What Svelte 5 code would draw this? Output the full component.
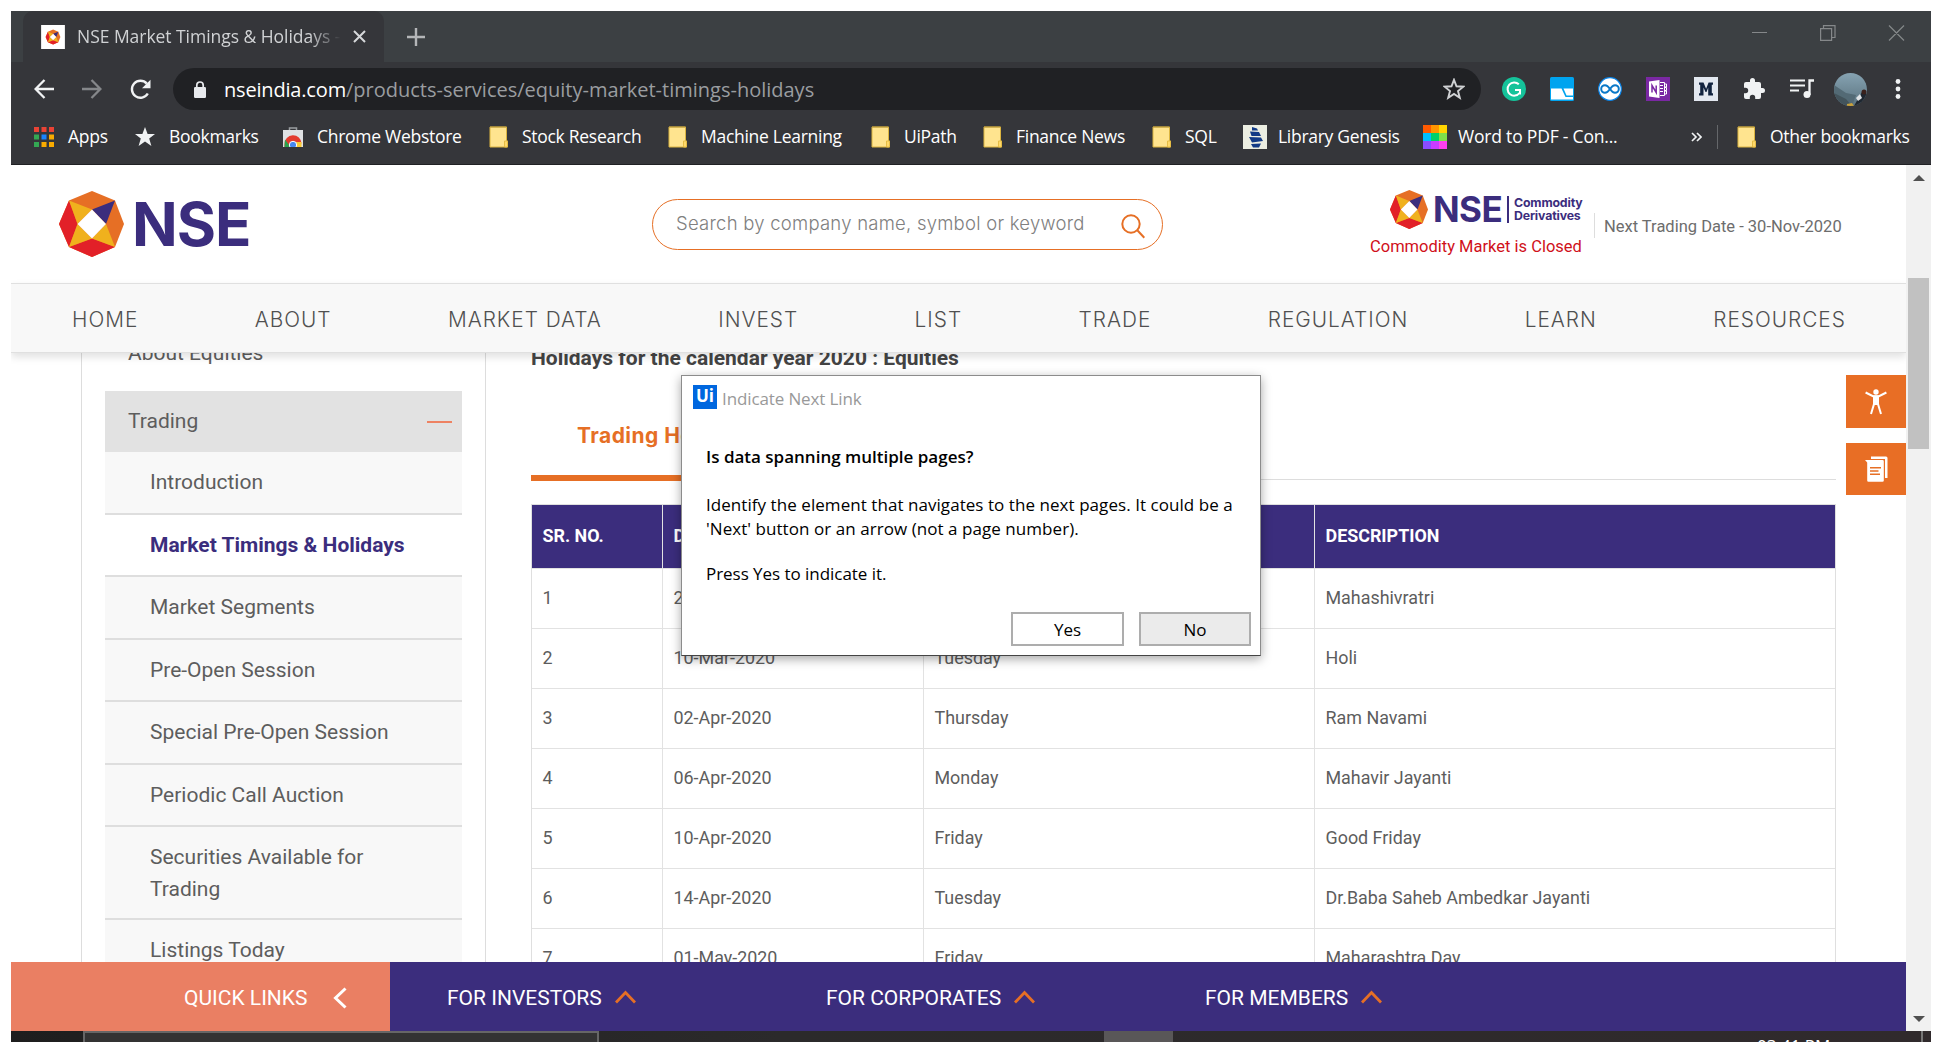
<script lang="ts">
  const bookmarks = [
    { label: 'Apps', icon: 'apps', w: 101 },
    { label: 'Bookmarks', icon: 'star', w: 148 },
    { label: 'Chrome Webstore', icon: 'store', w: 206 },
    { label: 'Stock Research', icon: 'folder', w: 179 },
    { label: 'Machine Learning', icon: 'folder', w: 203 },
    { label: 'UiPath', icon: 'folder', w: 112 },
    { label: 'Finance News', icon: 'folder', w: 169 },
    { label: 'SQL', icon: 'folder', w: 91 },
    { label: 'Library Genesis', icon: 'ship', w: 180 },
    { label: 'Word to PDF - Con...', icon: 'grid', w: 268 }
  ];
  const grid = ['#ff5a00', '#ff9500', '#ffd500', '#00bfff', '#00d06a', '#7ee04a', '#8a4dff', '#c83cff', '#ff40f0'];
  const appDots = ['#ea4335', '#ea4335', '#ea4335', '#34a853', '#1a84ff', '#f9ab00', '#34a853', '#f9ab00', '#f9ab00'];
  const nav = ['HOME', 'ABOUT', 'MARKET DATA', 'INVEST', 'LIST', 'TRADE', 'REGULATION', 'LEARN', 'RESOURCES'];
  const side = [
    'Introduction',
    'Market Timings & Holidays',
    'Market Segments',
    'Pre-Open Session',
    'Special Pre-Open Session',
    'Periodic Call Auction',
    'Securities Available for Trading',
    'Listings Today'
  ];
  const rows = [
    ['1', '21-Feb-2020', 'Friday', 'Mahashivratri'],
    ['2', '10-Mar-2020', 'Tuesday', 'Holi'],
    ['3', '02-Apr-2020', 'Thursday', 'Ram Navami'],
    ['4', '06-Apr-2020', 'Monday', 'Mahavir Jayanti'],
    ['5', '10-Apr-2020', 'Friday', 'Good Friday'],
    ['6', '14-Apr-2020', 'Tuesday', 'Dr.Baba Saheb Ambedkar Jayanti'],
    ['7', '01-May-2020', 'Friday', 'Maharashtra Day']
  ];
  const links = ['FOR INVESTORS', 'FOR CORPORATES', 'FOR MEMBERS'];
</script>

{#snippet gem()}
  <polygon points="33,0 56,9.5 65,33 56,56 33,66 10,56 0,33 10,9.5" fill="#e66f25" />
  <polygon points="10,9.5 0,33 10,56 18.5,33" fill="#e22028" />
  <polygon points="10,56 33,66 56,56 33,47.5" fill="#e22028" />
  <polygon points="10,9.5 33,18.5 18.5,33" fill="#f0b11d" />
  <polygon points="10,56 18.5,33 33,47.5" fill="#f0b11d" />
  <polygon points="56,56 33,47.5 47,33" fill="#f0b11d" />
  <polygon points="56,9.5 33,18.5 47,33" fill="#3b2d7d" />
  <polygon points="33,18.5 47,33 33,47.5 18.5,33" fill="#fff" />
{/snippet}

{#snippet folder()}
  <svg width="20" height="22" viewBox="0 0 20 22">
    <path d="M1 1h16.500v14h1v6H1z" fill="#ffe48f" stroke="#dcb540" stroke-width="1" />
    <path d="M1 1h16.500" stroke="#b99a3c" />
    <path d="M15.500 21v-6h3v6z" fill="#ffd96a" stroke="#e6bd45" />
  </svg>
{/snippet}

<div class="window">
  <div class="tabs">
    <div class="tab">
      <svg class="fav" width="24" height="24" viewBox="-20 -20 105 106"><rect x="-20" y="-20" width="105" height="106" fill="#fff" />{@render gem()}</svg>
      <span class="tab-title">NSE Market Timings &amp; Holidays -</span>
      <svg width="13" height="13" viewBox="0 0 13 13"><path d="M1 1l11 11M12 1L1 12" stroke="#d6d8da" stroke-width="2" /></svg>
    </div>
    <svg class="plus" width="18" height="18" viewBox="0 0 18 18"><path d="M9 0v18M0 9h18" stroke="#b4b6b8" stroke-width="2.400" /></svg>
    <svg class="controls" width="153" height="16" viewBox="0 0 153 16" fill="none" stroke="#85888a" stroke-width="1.200">
      <path d="M0 7.500h15M71.500 3.500V.6h11.500v11.900h-3M68.600 3.600h11v11.800h-11zM137 .5l15 15M152 .5l-15 15" />
    </svg>
  </div>

  <div class="toolbar">
    <svg width="20" height="20" viewBox="0 0 20 20" fill="none" stroke="#f1f3f4" stroke-width="2.300"><path d="M20 10H2M10.500 1L1.600 10l8.900 9" /></svg>
    <svg width="20" height="20" viewBox="0 0 20 20" fill="none" stroke="#85878a" stroke-width="2.300"><path d="M0 10h18M9.500 1l8.900 9-8.900 9" /></svg>
    <svg width="21" height="21" viewBox="0 0 21 21"><path d="M17.800 14.500A8.500 8.500 0 1 1 16.800 4.600" fill="none" stroke="#f1f3f4" stroke-width="2.400" /><path d="M20.500.8v8.400H12z" fill="#f1f3f4" /></svg>
    <div class="address">
      <svg width="12" height="17" viewBox="0 0 12 17"><rect y="6" width="12" height="11" rx="1.200" fill="#e8eaed" /><path d="M2.800 7V4.200a3.200 3.200 0 0 1 6.400 0V7" fill="none" stroke="#e8eaed" stroke-width="1.700" /></svg>
      <span class="url"><b>nseindia.com</b>/products-services/equity-market-timings-holidays</span>
      <svg width="22" height="22" viewBox="0 0 22 22"><path d="M11 1.800l2.500 6.500 6.900.4-5.400 4.400 1.800 6.700L11 16l-5.800 3.800L7 13.100 1.600 8.700l6.900-.4z" fill="none" stroke="#d0d2d4" stroke-width="1.900" /></svg>
    </div>
    <div class="exts">
      <svg viewBox="0 0 24 24"><circle cx="12" cy="12" r="12" fill="#15c39a" /><path d="M16.800 7.300A6.600 6.600 0 1 0 17.500 16M13 13h5v4.500" fill="none" stroke="#fff" stroke-width="2" /></svg>
      <svg viewBox="0 0 24 24"><rect width="24" height="24" rx="1.500" fill="#00a4ef" /><path d="M1 11.500h10.500l4 8.500H23v2.500H1z" fill="#fff" /><path d="M13.500 11.500H23V18.500h-6.500z" fill="#fff" /></svg>
      <svg viewBox="0 0 24 24"><circle cx="12" cy="12" r="11.300" fill="#fff" stroke="#0a84e8" stroke-width="1.200" /><path d="M12 12c-2-3-3.200-3.800-5-3.800a3.800 3.800 0 0 0 0 7.600c1.800 0 3-.8 5-3.800s3.200-3.800 5-3.800a3.800 3.800 0 0 1 0 7.600c-1.800 0-3-.8-5-3.800z" fill="none" stroke="#0a78c8" stroke-width="2" /></svg>
      <svg viewBox="0 0 24 24"><rect width="24" height="24" fill="#7a28a3" /><path d="M14 5.500h4.500v13H14M18.500 7h2v3h-2M18.500 10.500h2v3h-2M18.500 14h2v3h-2M14 8.500h3M14 11.500h3M14 14.500h3" fill="none" stroke="#fff" stroke-width="1" /><path d="M3 4.500L13.500 3v18L3 19.500z" fill="#fff" /><path d="M6 15.500v-7l4.200 7v-7" fill="none" stroke="#7a28a3" stroke-width="1.500" /></svg>
      <svg viewBox="0 0 24 24"><rect width="24" height="24" fill="#e3e8f0" /><path d="M5 18.500v-2.300h1.200V7.800H5V5.500h4.500l2.600 6.300 2.500-6.300H19v2.300h-1.200v8.400H19v2.300h-4.800V10.500L12.500 15h-1L9.500 10.500v8z" fill="#12233f" /></svg>
      <svg viewBox="0 0 24 24"><path d="M20.500 11H19V7a2 2 0 0 0-2-2h-4V3.500a2.500 2.500 0 0 0-5 0V5H4a2 2 0 0 0-2 2v3.800h1.500a2.700 2.700 0 0 1 0 5.400H2V20a2 2 0 0 0 2 2h3.800v-1.500a2.700 2.700 0 0 1 5.400 0V22H17a2 2 0 0 0 2-2v-4h1.500a2.500 2.500 0 0 0 0-5z" fill="#f1f3f4" /></svg>
      <svg viewBox="0 0 24 24"><path d="M0 3.500h15M0 8.500h15M0 13.500h9" stroke="#f1f3f4" stroke-width="2.100" /><path d="M24 3.500h-4.500V18" fill="none" stroke="#f1f3f4" stroke-width="2.300" /><circle cx="17" cy="17.500" r="3.500" fill="#f1f3f4" /></svg>
      <svg class="avatar" viewBox="0 0 33 33"><defs><clipPath id="round"><circle cx="16.500" cy="16.500" r="16.500" /></clipPath><linearGradient id="sky" x2="0" y2="1"><stop offset="0" stop-color="#86a3b2" /><stop offset="1" stop-color="#5a727e" /></linearGradient></defs><g clip-path="url(#round)"><rect width="33" height="33" fill="url(#sky)" /><path d="M0 12l12 8 10 2-4 11H0z" fill="#536a75" /><path d="M0 20l12 6 6 7H0z" fill="#43545c" /><path d="M20 33l5-9 3-5 5 2v12z" fill="#1f2730" /><path d="M22 25l4-4 2 4-4 3z" fill="#dfe3e6" /><circle cx="30" cy="19" r="2.500" fill="#3a211c" /><path d="M13 31l5-1 2 3h-7z" fill="#c9a13b" /></g></svg>
      <svg viewBox="0 0 24 24" fill="#f1f3f4"><circle cx="12" cy="4.500" r="2.400" /><circle cx="12" cy="12" r="2.400" /><circle cx="12" cy="19.500" r="2.400" /></svg>
    </div>
  </div>

  <div class="bookmarks">
    {#each bookmarks as b}
      <div class="bm {b.icon}" style:width="{b.w}px">
        {#if b.icon === 'folder'}
          {@render folder()}
        {:else if b.icon === 'apps'}
          <svg width="20" height="20" viewBox="0 0 20 20">{#each appDots as c, i}<rect x={(i % 3) * 7.5} y={Math.floor(i / 3) * 7.5} width="5" height="5" fill={c} />{/each}</svg>
        {:else if b.icon === 'star'}
          <svg width="20" height="20" viewBox="0 0 20 20"><path d="M10 0l2.600 7H20l-5.800 4.500L16.400 19 10 14.600 3.600 19l2.200-7.500L0 7h7.400z" fill="#f1f3f4" /></svg>
        {:else if b.icon === 'store'}
          <svg width="20" height="20" viewBox="0 0 20 20"><path d="M6.500 4V1h7v3" fill="none" stroke="#9b9ea1" stroke-width="1.500" /><path d="M0 3h20v17H0z" fill="#dfe1e3" /><path d="M1.500 20V17a8.500 8.500 0 0 1 17-.5L10 15l-4 5z" fill="#e33b2e" /><path d="M2 12.500L7.500 20H1.500z" fill="#2ba24c" /><path d="M12 15h6.500v5H12z" fill="#fccb34" /><circle cx="10" cy="18" r="3.700" fill="#4688f1" stroke="#fff" /></svg>
        {:else if b.icon === 'ship'}
          <svg width="24" height="24" viewBox="0 0 24 24"><rect width="24" height="24" fill="#eceee2" /><path d="M9 2l5 1.500 1 2H9zM7 6.500l9 .5 2 4H8.500zM6 12l12 .5 2 3.500-11 1.500zM8 19l10-.5-2 4H10z" fill="#123a86" /></svg>
        {:else}
          <svg width="24" height="24" viewBox="0 0 24 24">{#each grid as c, i}<rect x={(i % 3) * 8} y={Math.floor(i / 3) * 8} width="8" height="8" fill={c} />{/each}</svg>
        {/if}
        <span>{b.label}</span>
      </div>
    {/each}
    <svg class="more" width="11" height="10" viewBox="0 0 11 10"><path d="M1 1l4 4-4 4M6 1l4 4-4 4" fill="none" stroke="#f1f3f4" stroke-width="1.700" /></svg>
    <div class="sep"></div>
    <div class="bm folder">{@render folder()}<span>Other bookmarks</span></div>
  </div>

  <div class="viewport">
    <div class="page">
      <header>
        <div class="brand">
          <svg width="65" height="66" viewBox="0 0 65 66">{@render gem()}</svg>
          <span>NSE</span>
        </div>
        <div class="search">
          <span>Search by company name, symbol or keyword</span>
          <svg width="25" height="25" viewBox="0 0 25 25" fill="none" stroke="#e66f25" stroke-width="2"><circle cx="10" cy="10" r="8.700" /><path d="M16.300 16.300l7 7.400" /></svg>
        </div>
        <div class="commodity">
          <div class="cd">
            <svg width="38" height="39" viewBox="0 0 65 66" preserveAspectRatio="none">{@render gem()}</svg>
            <span class="cd-nse">NSE</span>
            <span class="cd-name">Commodity<br />Derivatives</span>
          </div>
          <p>Commodity Market is Closed</p>
        </div>
        <div class="next">Next Trading Date - 30-Nov-2020</div>
      </header>
      <nav>
        {#each nav as n}<span>{n}</span>{/each}
      </nav>
      <main>
        <aside>
          <div class="group first">About Equities</div>
          <div class="group open"><span>Trading</span><i></i></div>
          {#each side as s, i}<div class="item" class:active={i === 1}>{s}</div>{/each}
        </aside>
        <section>
          <h2>Holidays for the calendar year 2020 : Equities</h2>
          <div class="subtabs"><span>Trading Holidays</span></div>
          <div class="table">
            <div class="row head"><span>SR. NO.</span><span>DATE</span><span>DAY</span><span>DESCRIPTION</span></div>
            {#each rows as r}
              <div class="row">{#each r as c}<span>{c}</span>{/each}</div>
            {/each}
          </div>
        </section>
      </main>
      <footer>
        <div class="quick"><span>QUICK LINKS</span><svg width="14" height="22" viewBox="0 0 14 22"><path d="M12.500 1.500L2.500 11l10 9.500" fill="none" stroke="#fff" stroke-width="3" /></svg></div>
        {#each links as l}
          <div class="link"><span>{l}</span><svg width="21" height="14" viewBox="0 0 21 14"><path d="M1 12.500l9.500-10 9.500 10" fill="none" stroke="#e66f25" stroke-width="2.800" /></svg></div>
        {/each}
      </footer>
      <div class="float">
        <div class="fb"><svg width="22" height="26" viewBox="0 0 22 26"><circle cx="11" cy="3" r="2.700" fill="#fff" /><path d="M.6 3.500L8 7.200h6L21.400 3.500M9 8v7L6 25M13 8v7l3 10" fill="none" stroke="#fff" stroke-width="2" /><path d="M8 6.500h6V16H8z" fill="#fff" /></svg></div>
        <div class="fb docs"><svg width="23" height="26" viewBox="0 0 23 26"><path d="M6 .5h15a1.500 1.500 0 0 1 1.500 1.500v20H20V3H6z" fill="#fff" /><path d="M0 4h17.500a1.300 1.300 0 0 1 1.300 1.300V24.500a1.300 1.300 0 0 1-1.300 1.300H3.500a1.300 1.300 0 0 1-1.300-1.300V6.500z" fill="#fff" /><path d="M5 11.800h11M5 15h8.500M5 18.200h10" stroke="#e66f25" stroke-width="1.400" /></svg></div>
      </div>
    </div>
    <div class="scroll">
      <svg width="12" height="6" viewBox="0 0 12 6"><path d="M0 6l6-6 6 6z" fill="#505050" /></svg>
      <div class="thumb"></div>
      <svg width="12" height="6" viewBox="0 0 12 6"><path d="M0 0l6 6 6-6z" fill="#505050" /></svg>
    </div>
  </div>

  <div class="taskbar">
    <div class="find"></div>
    <div class="task"></div>
    <span class="clock">03:41 PM</span>
    <div class="peek"></div>
  </div>

  <div class="dialog">
    <div class="dlg-title"><b>Ui</b><span>Indicate Next Link</span></div>
    <div class="dlg-body">
      <h3>Is data spanning multiple pages?</h3>
      <p>Identify the element that navigates to the next pages. It could be a<br />'Next' button or an arrow (not a page number).</p>
      <p class="last">Press Yes to indicate it.</p>
    </div>
    <div class="dlg-actions"><button>Yes</button><button class="no">No</button></div>
  </div>
</div>

<style>
  :global(body) { margin: 0; background: #fff; overflow: hidden; }
  * { box-sizing: border-box; }
  svg { display: block; flex: none; }
  span { white-space: nowrap; }
  .window { position: relative; width: 1920px; height: 1031px; margin: 11px 0 0 11px; display: flex; flex-direction: column; overflow: hidden; font-family: 'Open Sans', 'Noto Sans', sans-serif; }

  .tabs { height: 51px; flex: none; display: flex; align-items: center; background: #3c4043; padding-left: 12px; }
  .tab { width: 361px; height: 51px; display: flex; align-items: center; padding-left: 18px; background: #35363a; border-radius: 10px 10px 0 0; }
  .tab-title { width: 264px; margin: -2px 12px 0; overflow: hidden; font-size: 17.500px; letter-spacing: -0.040px; color: #d0d2d4; mask-image: linear-gradient(90deg, #000 88%, transparent); }
  .plus { margin-left: 23px; }
  .controls { margin-left: auto; margin-right: 26px; margin-top: -8px; }

  .toolbar { height: 54px; flex: none; display: flex; align-items: center; background: #35363a; padding: 0 0 0 23px; }
  .toolbar > svg { margin-right: 28px; }
  .toolbar > svg:nth-of-type(3) { margin-right: 22px; }
  .address { width: 1308px; height: 42px; display: flex; align-items: center; border-radius: 21px; background: #202124; padding: 0 16px 0 21px; }
  .url { flex: 1; margin-left: 18px; font-size: 20px; color: #9a9da0; }
  .url b { font-weight: 400; color: #fff; letter-spacing: -0.180px; }
  .exts { display: grid; grid-template-columns: repeat(9, 48px); margin-left: 9px; align-items: center; justify-items: center; }
  .exts svg { width: 24px; height: 24px; }
  .exts svg.avatar { width: 33px; height: 33px; }

  .bookmarks { height: 49px; flex: none; display: flex; align-items: center; background: #35363a; border-bottom: 1px solid #202124; padding: 0 0 6px 23px; font-size: 17.500px; letter-spacing: -0.280px; color: #fff; }
  .bm { display: flex; align-items: center; flex: none; gap: 14px; }
  .bm span { margin-top: -2px; }
  .bm.folder { gap: 13px; }
  .bm.ship, .bm.grid { gap: 11px; }
  .bm.grid { letter-spacing: -0.200px; }
  .sep { width: 1px; height: 24px; background: #65676a; margin: 0 19px 0 15px; }

  .viewport { flex: none; height: 866px; display: flex; background: #fff; }
  .page { position: relative; width: 1895px; height: 866px; display: flex; flex-direction: column; overflow: hidden; font-family: Roboto, sans-serif; }
  .scroll { width: 25px; background: #f1f1f1; display: flex; flex-direction: column; align-items: center; padding: 10px 0 9px; }
  .thumb { width: 21px; height: 171px; margin: 97px 0 auto; background: #c1c1c1; }

  header { height: 118px; flex: none; display: flex; align-items: flex-start; padding-left: 48px; background: #fff; }
  .brand { width: 593px; display: flex; align-items: center; gap: 8px; margin-top: 26px; height: 66px; font: 700 60px/66px Inter, sans-serif; letter-spacing: -1px; color: #3b2d7d; }
  .search { width: 511px; height: 51px; margin-top: 34px; border: 1.500px solid #e66f25; border-radius: 26px; display: flex; align-items: center; justify-content: space-between; padding: 0 16px 0 23px; font-family: Inter, sans-serif; font-weight: 300; font-size: 18.500px; letter-spacing: 0.240px; color: #808080; }
  .search span { margin-top: -3px; }
  .search svg { margin-top: 3px; }
  .commodity { margin: 25px 0 0 207px; width: 213px; color: #d0101a; font-size: 16.500px; }
  .cd { display: flex; align-items: center; height: 39px; padding-left: 20px; color: #3b2d7d; font-weight: 700; }
  .cd-nse { font: 700 35px/39px Inter, sans-serif; letter-spacing: -0.600px; margin-left: 5px; width: 68px; }
  .cd-name { border-left: 2px solid #3b2d7d; margin-left: 6px; padding: 0 0 1px 5px; font: 700 12.300px/13px Inter, sans-serif; letter-spacing: -0.150px; }
  .commodity p { margin: 8px 0 0; line-height: 20px; white-space: nowrap; }
  .next { margin: 48px 0 0 11px; height: 25px; border-left: 1px solid #ddd; padding-left: 9px; line-height: 27px; font-size: 16.500px; color: #6d6d6d; }

  nav { position: relative; z-index: 1; height: 70px; flex: none; display: flex; justify-content: space-between; align-items: center; padding: 2px 60px 0 61px; background: #f8f8f8; border-top: 1px solid #e0e0e0; border-bottom: 1px solid #e0e0e0; box-shadow: 0 4px 8px rgba(0, 0, 0, 0.12); font-family: Inter, sans-serif; font-size: 20.800px; letter-spacing: 1px; font-weight: 300; color: #505050; }

  main { flex: 1; min-height: 0; display: flex; padding-left: 70px; overflow: hidden; background: #fff; }
  aside { width: 405px; flex: none; border: 1px solid #ddd; border-width: 0 1px; padding: 0 23px; font-size: 21px; line-height: 31.250px; color: #5d5d5d; }
  .group { display: flex; align-items: center; justify-content: space-between; padding: 1px 10px 0 23px; height: 61px; }
  .group.first { height: 38px; padding-bottom: 37px; }
  .group.open { background: #e2e2e2; }
  .group i { width: 25px; height: 2px; background: #ee8262; }
  .item { padding: 15.250px 60px 13px 45px; border-bottom: 2px solid #dedede; min-height: 62.500px; background: #f8f8f8; }
  .item.active { background: #fff; font-weight: 700; color: #3b2d7d; white-space: nowrap; }

  section { margin-left: 45px; width: 1305px; }
  h2 { margin: -7px 0 1px; font-size: 21px; line-height: 24px; font-weight: 700; color: #444; }
  .subtabs { height: 109px; border-bottom: 1px solid #ddd; }
  .subtabs span { display: inline-block; height: 110px; width: 300px; padding: 51px 0 0 46px; border-bottom: 6px solid #e66f25; font: 700 21px/28px Inter, sans-serif; letter-spacing: 0.450px; color: #e66f25; }
  .table { margin-top: 24px; border: 1px solid #dfdfdf; font-size: 17.900px; color: #5d5d5d; }
  .row { display: grid; grid-template-columns: 131px 261px 391px 1fr; height: 60px; border-bottom: 1px solid #e2e2e2; }
  .row span { display: flex; align-items: center; padding: 0 0 2px 10.500px; border-right: 1px solid #e2e2e2; }
  .row span:last-child { border-right: 0; }
  .row.head { height: 64px; background: #3b2d7d; color: #fff; font-weight: 700; }

  footer { height: 69px; flex: none; display: flex; background: #3b2d7d; color: #fff; font-size: 21px; position: relative; }
  footer span { margin-top: 2px; }
  .quick, .link { width: 379px; display: flex; align-items: center; }
  .quick { background: #ea7f63; padding: 3px 0 0 173px; gap: 26px; }
  .quick span { margin-top: 0; }
  .link { padding-left: 57px; gap: 13px; }

  .float { position: absolute; right: 0; top: 210px; display: grid; gap: 15px; }
  .fb { width: 60px; height: 53px; background: #e86e25; display: flex; align-items: center; justify-content: center; }
  .fb.docs { height: 52px; }

  .taskbar { height: 11px; flex: none; display: flex; background: linear-gradient(90deg, #1e1e1e, #2b2a2b 40%, #302a2c); overflow: hidden; }
  .find { width: 516px; height: 40px; margin-left: 72px; border: 2px solid #666; background: #333; }
  .task { width: 69px; margin-left: 505px; background: #595758; }
  .clock { margin-left: 584px; width: 164px; line-height: 20px; padding-top: 5px; color: #fff; font-size: 17px; }
  .peek { width: 2px; background: #777; }

  .dialog { position: absolute; left: 670px; top: 364px; width: 580px; height: 281px; display: flex; flex-direction: column; background: #fff; border: 1px solid #8c8c8c; border-bottom-color: #444; box-shadow: 0 3px 10px rgba(0, 0, 0, 0.35); color: #000; font-size: 17px; }
  .dlg-title { display: flex; align-items: center; gap: 5px; margin: 9px 0 0 11px; height: 24px; color: #999; letter-spacing: -0.120px; }
  .dlg-title b { width: 24px; height: 24px; background: #0067df; color: #fff; font-size: 17px; line-height: 22px; text-align: center; }
  .dlg-title span { padding-top: 2px; }
  .dlg-body { padding: 36px 0 0 24px; white-space: nowrap; }
  .dlg-body h3, .dlg-body p { margin: 0; font-size: 17px; line-height: 24px; letter-spacing: 0.055px; }
  .dlg-body h3 { font-weight: 600; margin-bottom: 24px; letter-spacing: 0; }
  .dlg-body .last { margin-top: 21px; letter-spacing: -0.040px; }
  .dlg-actions { margin-top: auto; display: flex; justify-content: flex-end; gap: 15px; padding: 0 9px 9px; }
  button { width: 113px; height: 34px; padding: 0; border: 2px solid #adadad; background: #fff; font: 17px 'Open Sans', sans-serif; color: #000; }
  button.no { width: 112px; background: #ebebeb; }
</style>
